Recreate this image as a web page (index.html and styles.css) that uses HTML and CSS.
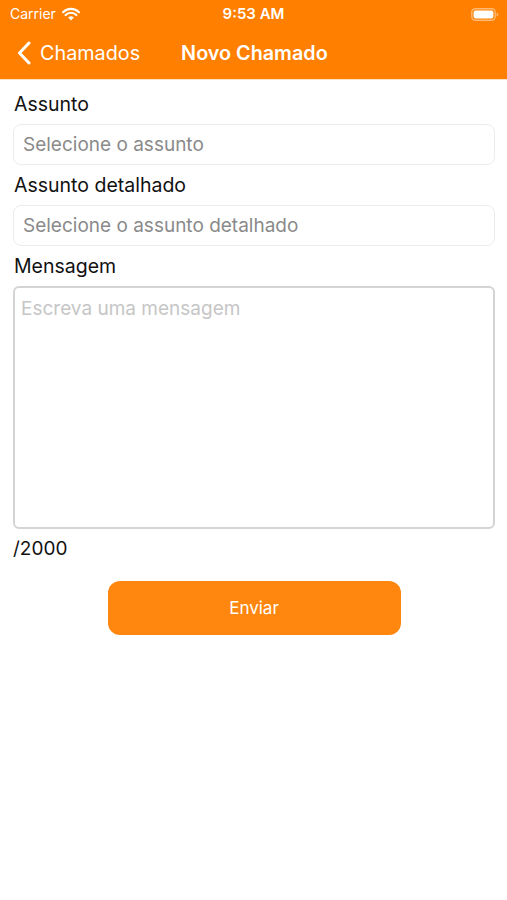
FILE: index.html
```html
<!DOCTYPE html>
<html lang="pt-BR">
<head>
    <meta charset="UTF-8">
    <meta name="viewport" content="width=device-width, initial-scale=1.0">
    <title>Novo Chamado</title>
    <link rel="stylesheet" href="styles.css">
</head>
<body>
    <header class="topbar">
        <div class="statusbar">
            <div class="status-left">
                <span class="carrier">Carrier</span>
                <svg class="wifi" width="18" height="14" viewBox="0 0 18 14">
                    <path d="M9 13.5 L6.2 10.6 A4 4 0 0 1 11.8 10.6 Z" fill="#fff"/>
                    <path d="M3.6 8 A7.6 7.6 0 0 1 14.4 8" fill="none" stroke="#fff" stroke-width="2.2" stroke-linecap="round"/>
                    <path d="M1.1 5.2 A11.2 11.2 0 0 1 16.9 5.2" fill="none" stroke="#fff" stroke-width="2.2" stroke-linecap="round"/>
                </svg>
            </div>
            <span class="clock">9:53 AM</span>
            <div class="status-right">
                <svg class="battery" width="28" height="13" viewBox="0 0 28 13">
                    <rect x="0.8" y="0.8" width="23.4" height="11.4" rx="3.5" fill="none" stroke="rgba(255,255,255,0.45)" stroke-width="1.4"/>
                    <rect x="2.6" y="2.6" width="19.8" height="7.8" rx="2" fill="#fff"/>
                    <path d="M25.6 4.4 Q27.4 4.6 27.4 6.5 Q27.4 8.4 25.6 8.6 Z" fill="rgba(255,255,255,0.45)"/>
                </svg>
            </div>
        </div>
        <nav class="navbar">
            <a class="back" href="#">
                <svg width="16" height="24" viewBox="0 0 16 24">
                    <path d="M13 2 L3.5 12 L13 22" fill="none" stroke="#fff" stroke-width="3" stroke-linecap="round" stroke-linejoin="round"/>
                </svg>
                <span>Chamados</span>
            </a>
            <h1 class="title">Novo Chamado</h1>
        </nav>
    </header>

    <main class="form">
        <label class="label" for="assunto">Assunto</label>
        <input class="field" type="text" id="assunto" placeholder="Selecione o assunto" readonly>

        <label class="label" for="detalhe">Assunto detalhado</label>
        <input class="field" type="text" id="detalhe" placeholder="Selecione o assunto detalhado" readonly>

        <label class="label" for="mensagem">Mensagem</label>
        <textarea class="message" id="mensagem" placeholder="Escreva uma mensagem" maxlength="2000"></textarea>
        <div class="counter" id="counter">/2000</div>

        <button class="send" type="button">Enviar</button>
    </main>
</body>
</html>
```

FILE: styles.css
```css
body {
    margin: 0;
    padding: 0;
    font-family: Inter, "Liberation Sans", Arial, sans-serif;
    background: #ffffff;
    color: #111;
}

.topbar {
    background: #ff8000;
    color: #fff;
    border-bottom: 1px solid #fde2c4;
}

.statusbar {
    height: 27px;
    display: flex;
    align-items: center;
    justify-content: space-between;
    padding: 0 8px 0 10px;
    position: relative;
}

.status-left {
    display: flex;
    align-items: center;
    gap: 6px;
}

.carrier {
    font-size: 14px;
}

.clock {
    position: absolute;
    left: 0;
    right: 0;
    text-align: center;
    font-size: 15px;
    font-weight: 600;
}

.battery {
    display: block;
    margin-top: 1px;
}

.navbar {
    height: 52px;
    display: flex;
    align-items: center;
    padding: 0 16px;
}

.back {
    display: flex;
    align-items: center;
    gap: 8px;
    color: #fff;
    text-decoration: none;
    font-size: 19.8px;
}

.back svg {
    display: block;
}

.title {
    margin: 0 0 0 41px;
    font-size: 19.8px;
    font-weight: 600;
}

.form {
    display: flex;
    flex-direction: column;
    padding: 12px 12px 0 13px;
}

.label {
    font-size: 19.5px;
    line-height: 24px;
    padding-left: 1px;
    margin-bottom: 8px;
}

.field, .message {
    font-family: inherit;
    font-size: 19px;
    box-sizing: border-box;
    width: 100%;
    margin: 0 0 8px;
    outline: none;
    background: #fff;
}

.field {
    height: 41px;
    padding: 0 9px;
    border: 1px solid #ececec;
    border-radius: 8px;
}

.field::placeholder {
    color: #8a8a8a;
}

.message {
    height: 243px;
    padding: 9px 6px;
    border: 2px solid #d4d4d4;
    border-radius: 6px;
    resize: none;
}

.message::placeholder {
    color: #c6c6c6;
}

.counter {
    font-size: 19px;
    line-height: 24px;
}

.send {
    align-self: center;
    width: 293px;
    height: 54px;
    margin-top: 20px;
    border: none;
    border-radius: 12px;
    background: #ff870f;
    color: #fff;
    font-family: inherit;
    font-size: 17px;
    cursor: pointer;
}
```
